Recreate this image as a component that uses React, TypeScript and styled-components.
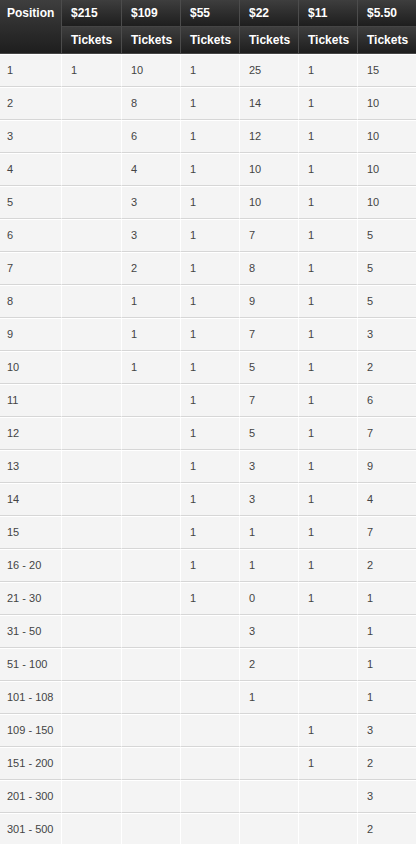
import React from 'react';
import styled, { createGlobalStyle } from 'styled-components';

const GlobalStyle = createGlobalStyle`
  html, body {
    margin: 0;
    padding: 0;
    background: #ffffff;
  }
  body {
    font-family: "Liberation Sans", Arial, sans-serif;
  }
`;

const Table = styled.table`
  width: 416px;
  table-layout: fixed;
  border-collapse: separate;
  border-spacing: 0;
`;

const HeadCell = styled.th<{ $last?: boolean; $tall?: boolean }>`
  box-sizing: border-box;
  height: ${({ $tall }) => ($tall ? '54px' : '27px')};
  padding: ${({ $tall }) => ($tall ? '6px 0 0 7px' : '0 0 0 9px')};
  vertical-align: ${({ $tall }) => ($tall ? 'top' : 'middle')};
  text-align: left;
  color: #ffffff;
  font-size: 12px;
  font-weight: bold;
  line-height: 14px;
  white-space: nowrap;
  background: linear-gradient(to bottom, #3e3e3e 0%, #2c2c2c 55%, #1e1e1e 100%);
  border-right: ${({ $last }) => ($last ? 'none' : '1px solid #4c4c4c')};
  border-bottom: 1px solid #454545;
`;

const Cell = styled.td<{ $first?: boolean; $last?: boolean }>`
  box-sizing: border-box;
  height: 33px;
  padding: 0 0 0 ${({ $first }) => ($first ? '7px' : '9px')};
  color: #444444;
  font-size: 11px;
  line-height: 13px;
  white-space: nowrap;
  background: #f4f4f4;
  border-top: 1px solid #ffffff;
  border-right: ${({ $last }) => ($last ? 'none' : '1px solid #ffffff')};
  border-bottom: 1px solid #d6d6d6;
`;

const prizes = ['$215', '$109', '$55', '$22', '$11', '$5.50'];
const widths = [62, 60, 59, 59, 59, 59, 58];

const rows: [string, string[]][] = [
  ['1', ['1', '10', '1', '25', '1', '15']],
  ['2', ['', '8', '1', '14', '1', '10']],
  ['3', ['', '6', '1', '12', '1', '10']],
  ['4', ['', '4', '1', '10', '1', '10']],
  ['5', ['', '3', '1', '10', '1', '10']],
  ['6', ['', '3', '1', '7', '1', '5']],
  ['7', ['', '2', '1', '8', '1', '5']],
  ['8', ['', '1', '1', '9', '1', '5']],
  ['9', ['', '1', '1', '7', '1', '3']],
  ['10', ['', '1', '1', '5', '1', '2']],
  ['11', ['', '', '1', '7', '1', '6']],
  ['12', ['', '', '1', '5', '1', '7']],
  ['13', ['', '', '1', '3', '1', '9']],
  ['14', ['', '', '1', '3', '1', '4']],
  ['15', ['', '', '1', '1', '1', '7']],
  ['16 - 20', ['', '', '1', '1', '1', '2']],
  ['21 - 30', ['', '', '1', '0', '1', '1']],
  ['31 - 50', ['', '', '', '3', '', '1']],
  ['51 - 100', ['', '', '', '2', '', '1']],
  ['101 - 108', ['', '', '', '1', '', '1']],
  ['109 - 150', ['', '', '', '', '1', '3']],
  ['151 - 200', ['', '', '', '', '1', '2']],
  ['201 - 300', ['', '', '', '', '', '3']],
  ['301 - 500', ['', '', '', '', '', '2']],
];

export default function App() {
  return (
    <>
      <GlobalStyle />
      <Table>
        <colgroup>
          {widths.map((w, i) => (
            <col key={i} style={{ width: w }} />
          ))}
        </colgroup>
        <thead>
          <tr>
            <HeadCell rowSpan={2} $tall>
              Position
            </HeadCell>
            {prizes.map((p, i) => (
              <HeadCell key={p} $last={i === prizes.length - 1}>
                {p}
              </HeadCell>
            ))}
          </tr>
          <tr>
            {prizes.map((p, i) => (
              <HeadCell key={p} $last={i === prizes.length - 1}>
                Tickets
              </HeadCell>
            ))}
          </tr>
        </thead>
        <tbody>
          {rows.map(([pos, vals]) => (
            <tr key={pos}>
              <Cell $first>{pos}</Cell>
              {vals.map((v, i) => (
                <Cell key={i} $last={i === vals.length - 1}>
                  {v}
                </Cell>
              ))}
            </tr>
          ))}
        </tbody>
      </Table>
    </>
  );
}
